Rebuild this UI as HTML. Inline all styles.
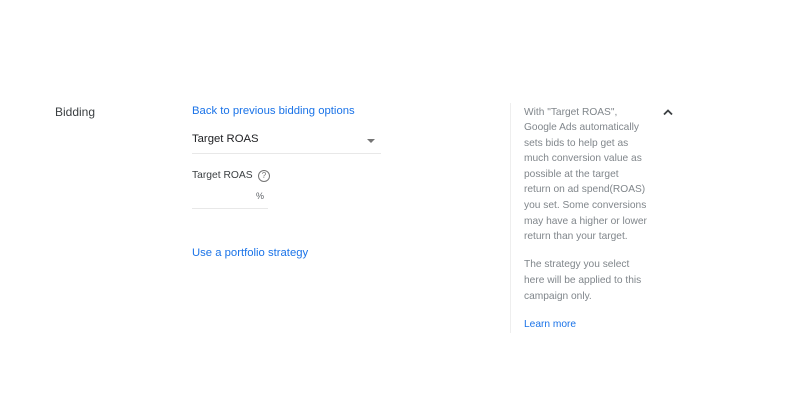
<!DOCTYPE html>
<html><head><style>
body{margin:0;width:805px;height:405px;background:#fff;font-family:"Liberation Sans",Arial,sans-serif;position:relative;overflow:hidden}
.a{position:absolute;white-space:nowrap}
.blue{color:#1a73e8}
</style></head><body>
<div class="a" style="left:55px;top:105px;font-size:12px;color:#3c4043">Bidding</div>
<div class="a blue" style="left:192px;top:105px;font-size:11.3px;">Back to previous bidding options</div>
<div class="a" style="left:192px;top:133px;font-size:11.3px;color:#202124">Target ROAS</div>
<div class="a" style="left:367px;top:139px;width:0;height:0;border-left:4px solid transparent;border-right:4px solid transparent;border-top:4px solid #757575"></div>
<div class="a" style="left:192px;top:153px;width:189px;height:1px;background:#e8e8e8"></div>
<div class="a" style="left:192px;top:170px;font-size:10.3px;color:#3c4043">Target ROAS</div>
<div class="a" style="left:258px;top:170px;width:10px;height:10px;border:1px solid #757575;border-radius:50%;font-size:8px;line-height:10px;text-align:center;color:#757575">?</div>
<div class="a" style="left:256px;top:191px;font-size:9px;color:#5f6368">%</div>
<div class="a" style="left:192px;top:208px;width:76px;height:1px;background:#e8e8e8"></div>
<div class="a blue" style="left:192px;top:247px;font-size:11.3px;">Use a portfolio strategy</div>
<div class="a" style="left:510px;top:103px;width:1px;height:230px;background:#eeeeee"></div>
<div class="a" style="left:524px;top:104.5px;font-size:10.2px;line-height:15.6px;color:#80868b;white-space:normal;width:135px">With "Target ROAS",<br>Google Ads automatically<br>sets bids to help get as<br>much conversion value as<br>possible at the target<br>return on ad spend(ROAS)<br>you set. Some conversions<br>may have a higher or lower<br>return than your target.<div style="height:12.6px"></div>The strategy you select<br>here will be applied to this<br>campaign only.<div style="height:12.6px"></div><span class="blue">Learn more</span></div>
<svg class="a" style="left:662px;top:107px" width="12" height="10" viewBox="0 0 12 10"><path d="M2 7.5L6 3.5L10 7.5" fill="none" stroke="#3c4043" stroke-width="1.8"/></svg>
</body></html>
